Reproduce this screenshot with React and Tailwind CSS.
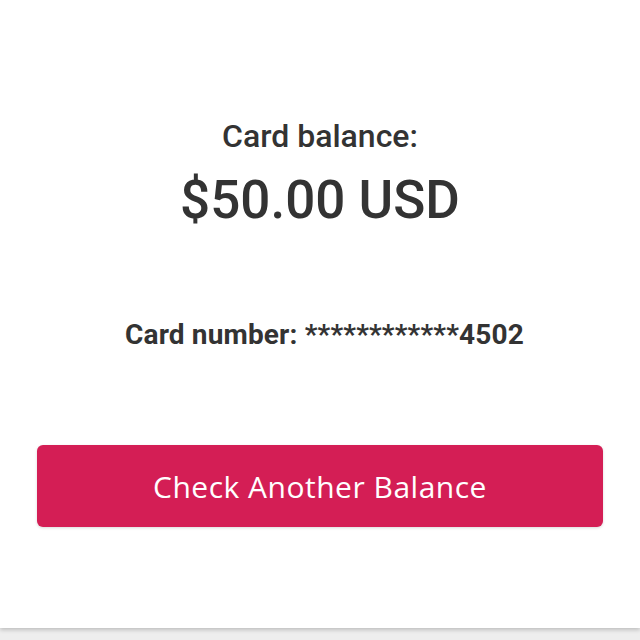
export default function App() {
  return (
    <div className="w-[640px] h-[640px] bg-[#eeeeee] overflow-hidden" style={{ fontFamily: 'Roboto, sans-serif' }}>
      <div className="h-[628px] bg-white shadow-[0_2px_4px_rgba(0,0,0,0.2)] flex flex-col items-center pt-[116px] px-[37px]">
        <p className="text-[32px] leading-[40px] font-medium text-[#333333]">Card balance:</p>
        <p className="mt-[13px] text-[53px] leading-[62px] font-medium text-[#333333]">$50.00 USD</p>
        <p className="mt-[87px] ml-[9px] text-[28px] leading-[34px] font-bold text-[#333333] tracking-[0.15px]">
          Card number: ************4502
        </p>
        <button
          className="mt-[93px] w-full h-[82px] rounded-[6px] bg-[#d41e55] text-white text-[30px] tracking-[0.5px] shadow-[0_1px_3px_rgba(0,0,0,0.15)]"
          style={{ fontFamily: '"Open Sans", sans-serif' }}
        >
          Check Another Balance
        </button>
      </div>
    </div>
  );
}
